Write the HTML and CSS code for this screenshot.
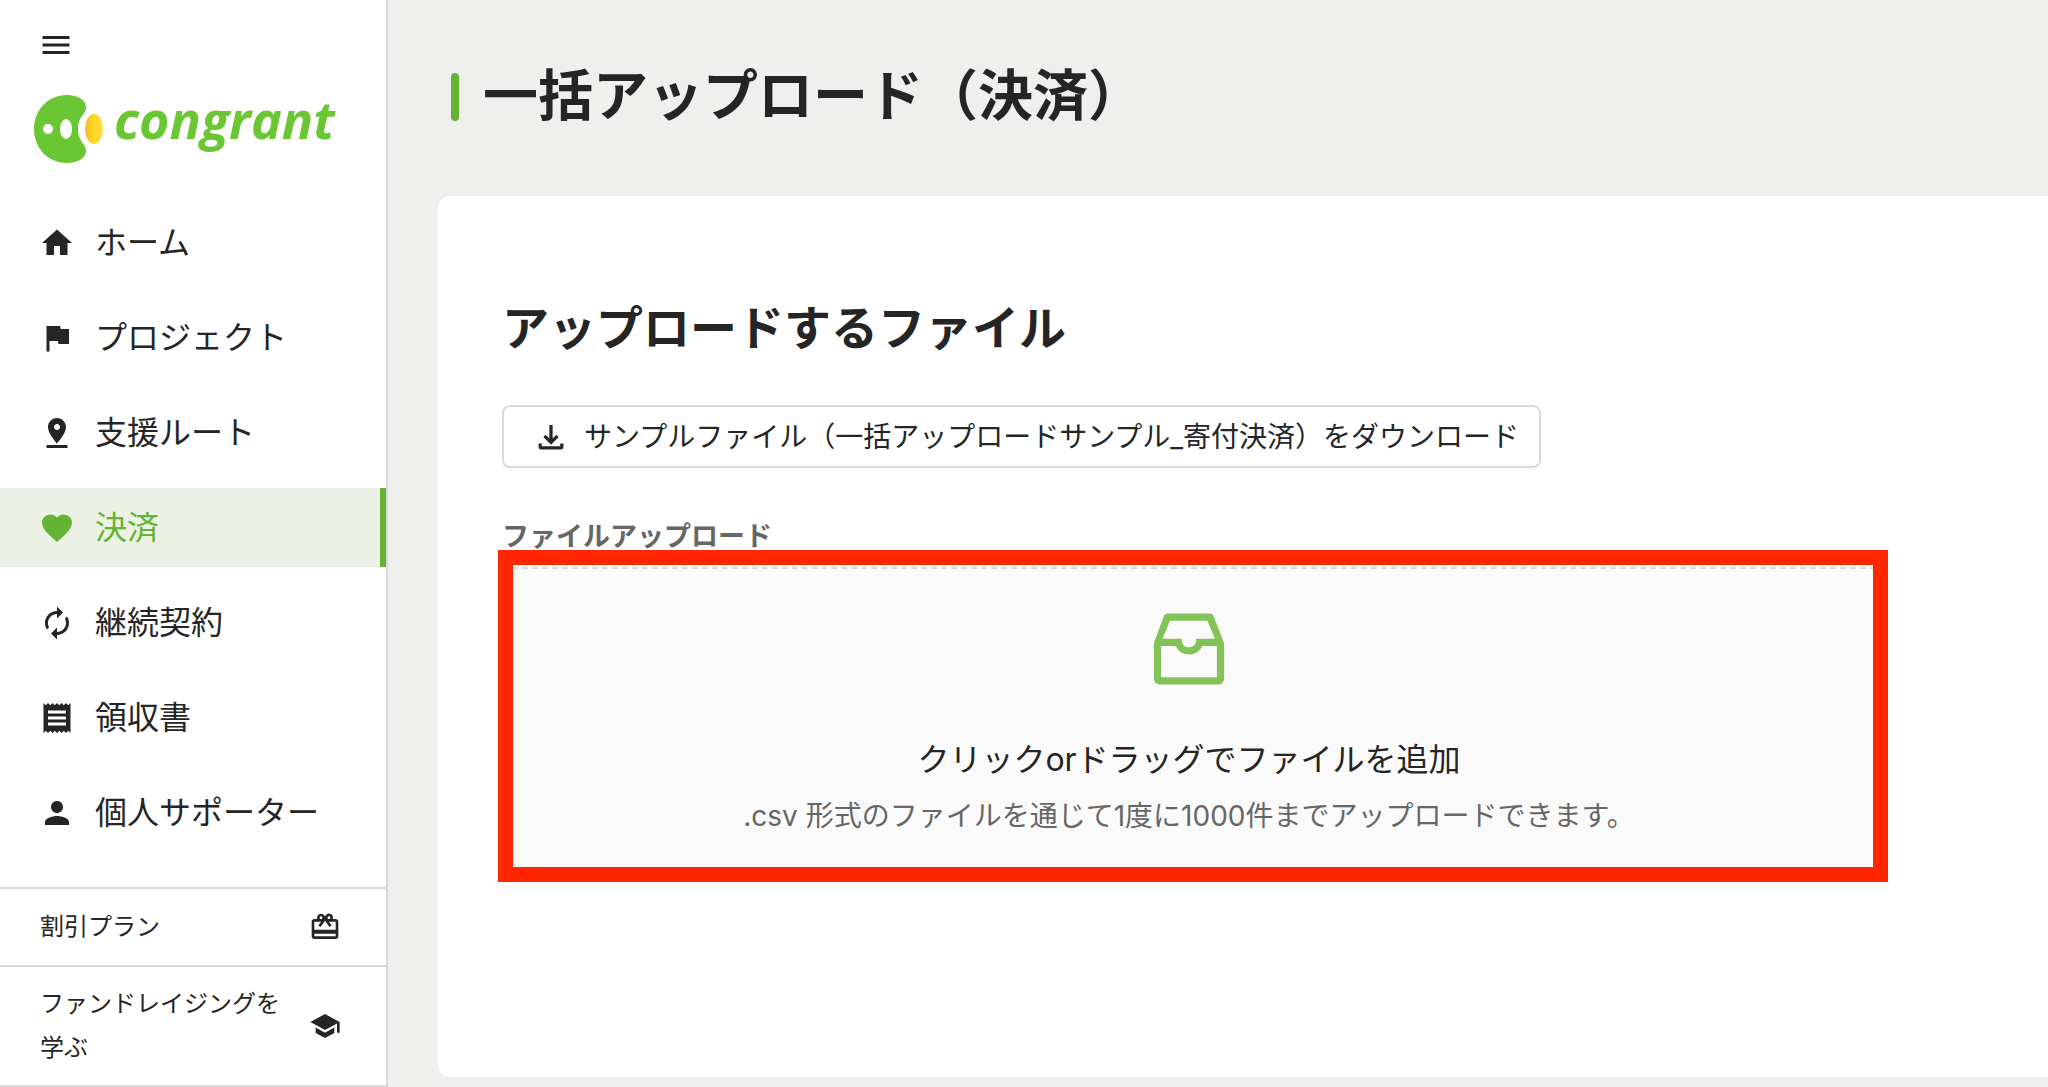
FILE: index.html
```
<!DOCTYPE html>
<html lang="ja">
<head>
  <meta charset="UTF-8">
  <meta name="viewport" content="width=device-width, initial-scale=1.0">
  <title>一括アップロード（決済）</title>

  <link rel="stylesheet" href="styles.css">
</head>
<body>

  <aside class="sidebar">
    <button class="menu-btn" type="button" aria-label="メニュー">
      <svg class="icon" viewBox="0 0 24 24"><path d="M3 18h18v-2H3v2zm0-5h18v-2H3v2zm0-7v2h18V6H3z"/></svg>
    </button>

    <a class="logo" href="#">
      <svg class="logo-mark" viewBox="33 94 72 70">
        <defs>
          <linearGradient id="bean">
            <stop offset="0" stop-color="#fdb52e"/>
            <stop offset="0.5" stop-color="#ffd91f"/>
            <stop offset="1" stop-color="#fddc4a"/>
          </linearGradient>
        </defs>
        <path fill="#6ac733" d="M67 95c11 0 19 5 19 12 0 8-8 9-8 22s8 14 8 22c0 7-8 12-19 12-19 0-33-15-33-34s14-34 33-34z"/>
        <circle cx="48" cy="129" r="5" fill="#fff"/>
        <ellipse cx="66" cy="129" rx="6" ry="10" fill="#fff"/>
        <ellipse cx="94" cy="129" rx="9" ry="15" fill="url(#bean)"/>
      </svg>
      <span class="logo-text">congrant</span>
    </a>

    <nav class="nav">
      <a class="nav-item" href="#">
        <svg class="icon" viewBox="0 0 24 24"><path d="M10 20v-6h4v6h5v-8h3L12 3 2 12h3v8z"/></svg>
        ホーム
      </a>
      <a class="nav-item" href="#">
        <svg class="icon" viewBox="0 0 24 24"><path d="M14.400 6L14 4H5v17h2v-7h5.600l.4 2h7V6z"/></svg>
        プロジェクト
      </a>
      <a class="nav-item" href="#">
        <svg class="icon" viewBox="0 0 24 24"><path d="M18 8c0-3.310-2.690-6-6-6S6 4.690 6 8c0 4.500 6 11 6 11s6-6.500 6-11zm-8 0c0-1.100.9-2 2-2s2 .9 2 2-.89 2-2 2c-1.100 0-2-.9-2-2zM5 20v2h14v-2H5z"/></svg>
        支援ルート
      </a>
      <a class="nav-item active" href="#">
        <svg class="icon" viewBox="0 0 24 24"><path d="M12 21.350l-1.450-1.320C5.400 15.360 2 12.280 2 8.500 2 5.420 4.420 3 7.500 3c1.740 0 3.410.81 4.500 2.090C13.090 3.810 14.760 3 16.500 3 19.580 3 22 5.420 22 8.500c0 3.780-3.400 6.860-8.550 11.540L12 21.350z"/></svg>
        決済
      </a>
      <a class="nav-item" href="#">
        <svg class="icon" viewBox="0 0 24 24"><path d="M12 6v3l4-4-4-4v3c-4.420 0-8 3.580-8 8 0 1.570.46 3.030 1.240 4.260L6.700 14.800c-.45-.83-.7-1.790-.7-2.800 0-3.310 2.690-6 6-6zm6.760 1.740L17.300 9.200c.44.84.7 1.790.7 2.800 0 3.310-2.690 6-6 6v-3l-4 4 4 4v-3c4.420 0 8-3.580 8-8 0-1.570-.46-3.030-1.240-4.260z"/></svg>
        継続契約
      </a>
      <a class="nav-item" href="#">
        <svg class="icon" viewBox="0 0 24 24"><path d="M18 17H6v-2h12v2zm0-4H6v-2h12v2zm0-4H6V7h12v2zM3 22l1.500-1.500L6 22l1.500-1.500L9 22l1.500-1.500L12 22l1.500-1.500L15 22l1.500-1.500L18 22l1.500-1.500L21 22V2l-1.500 1.500L18 2l-1.500 1.500L15 2l-1.500 1.500L12 2l-1.500 1.500L9 2 7.500 3.500 6 2 4.500 3.500 3 2v20z"/></svg>
        領収書
      </a>
      <a class="nav-item" href="#">
        <svg class="icon" viewBox="0 0 24 24"><path d="M12 12c2.210 0 4-1.790 4-4s-1.790-4-4-4-4 1.790-4 4 1.790 4 4 4zm0 2c-2.670 0-8 1.340-8 4v2h16v-2c0-2.660-5.330-4-8-4z"/></svg>
        個人サポーター
      </a>
    </nav>

    <div class="sub-nav">
      <a class="sub-item" href="#">
        <span>割引プラン</span>
        <svg class="icon small" viewBox="0 0 24 24"><path d="M20 6h-2.180c.11-.31.18-.65.18-1a2.996 2.996 0 0 0-5.500-1.650l-.5.67-.5-.68C10.960 2.540 10.050 2 9 2 7.340 2 6 3.340 6 5c0 .35.07.69.18 1H4c-1.110 0-1.990.89-1.990 2L2 19c0 1.110.89 2 2 2h16c1.110 0 2-.89 2-2V8c0-1.110-.89-2-2-2zm-5-2c.55 0 1 .45 1 1s-.45 1-1 1-1-.45-1-1 .45-1 1-1zM9 4c.55 0 1 .45 1 1s-.45 1-1 1-1-.45-1-1 .45-1 1-1zm11 15H4v-2h16v2zm0-5H4V8h5.080L7 10.830 8.620 12 11 8.760l1-1.360 1 1.360L15.380 12 17 10.830 14.920 8H20v6z"/></svg>
      </a>
      <a class="sub-item" href="#">
        <span>ファンドレイジングを学ぶ</span>
        <svg class="icon small" viewBox="0 0 24 24"><path d="M5 13.180v4L12 21l7-3.820v-4L12 17l-7-3.820zM12 3L1 9l11 6 9-4.910V17h2V9L12 3z"/></svg>
      </a>
    </div>
  </aside>

  <main class="main">
    <h1>一括アップロード（決済）</h1>

    <section class="card">
      <h2>アップロードするファイル</h2>

      <button class="download-btn" type="button">
        <svg class="download-icon" viewBox="0 0 24 24"><path d="M12 1v16M6 11l6 6 6-6M2 18v3q0 1 1 1h18q1 0 1-1v-3"/></svg>
        サンプルファイル（一括アップロードサンプル_寄付決済）をダウンロード
      </button>

      <label class="field-label" for="csv">ファイルアップロード</label>
      <div class="upload">
        <label class="dropzone" for="csv">
          <svg class="inbox-icon" viewBox="0 0 1024 1024"><path d="M885.200 446.300l-.2-.8-112.200-285.100c-5-16.100-19.900-27.200-36.800-27.200H281.200c-17 0-32.100 11.300-36.900 27.600L139.400 443l-.3.7-.2.8c-1.300 4.900-1.700 9.900-1 14.800-.1 1.600-.2 3.200-.2 4.800V830a60.900 60.900 0 0 0 60.800 60.800h627.200c33.500 0 60.800-27.300 60.900-60.800V464.100c0-1.300 0-2.600-.1-3.700.4-4.900 0-9.600-1.300-14.100zm-295.800-43l-.3 15.700c-.8 44.900-31.800 75.100-77.100 75.100-22.100 0-41.100-7.100-54.800-20.600S436 441.200 435.600 419l-.3-15.700H229.500L309 210h399.200l81.700 193.300H589.400zm-375 76.800h157.300c24.300 57.100 76 90.800 140.400 90.800 33.700 0 65-9.400 90.300-27.200 22.200-15.600 39.500-37.400 50.700-63.600h156.500V814H214.400V480.100z"/></svg>
          <span class="drop-title">クリックorドラッグでファイルを追加</span>
          <span class="drop-hint">.csv 形式のファイルを通じて1度に1000件までアップロードできます。</span>
        </label>
        <input class="file-input" id="csv" type="file" accept=".csv">
        <div class="highlight"></div>
      </div>
    </section>
  </main>

</body>
</html>
```
FILE: styles.css
```
* {
  margin: 0;
  padding: 0;
  box-sizing: border-box;
}

body {
  display: flex;
  min-height: 100vh;
  background: #efefee;
  color: #252525;
  font-family: Inter, "Noto Sans CJK JP", sans-serif;
  font-size: 28px;
}

a {
  color: inherit;
  text-decoration: none;
}

button {
  font: inherit;
  color: inherit;
  cursor: pointer;
}

.icon {
  width: 36px;
  height: 36px;
  flex: none;
  fill: currentColor;
}

.icon.small {
  width: 32px;
  height: 32px;
}

/* sidebar */
.sidebar {
  display: flex;
  flex-direction: column;
  flex: none;
  width: 388px;
  background: #fff;
  border-right: 2px solid #d9d9d9;
}

.menu-btn {
  align-self: flex-start;
  height: 36px;
  margin: 27px 0 0 38px;
  border: none;
  background: none;
}

.logo {
  display: flex;
  align-items: center;
  gap: 9px;
  height: 70px;
  margin: 31px 0 39px 33px;
}

.logo-mark {
  width: 72px;
  height: 70px;
  flex: none;
}

.logo-text {
  padding-bottom: 20px;
  color: #6ac733;
  font-family: "Open Sans", sans-serif;
  font-size: 52px;
  font-style: italic;
  font-weight: bold;
  line-height: 58px;
}

.nav {
  display: flex;
  flex-direction: column;
  gap: 16px;
  margin-bottom: 35px;
}

.nav-item {
  display: flex;
  align-items: center;
  gap: 20px;
  height: 79px;
  padding: 0 34px 0 39px;
  font-size: 32px;
  line-height: 48px;
}

.nav-item.active {
  background: #ebf2e5;
  border-right: 6px solid #64b334;
  color: #64b334;
}

.sub-nav {
  border-bottom: 2px solid #d9d9d9;
}

.sub-item {
  display: flex;
  align-items: center;
  justify-content: space-between;
  min-height: 78px;
  padding: 15px 45px 15px 40px;
  border-top: 2px solid #d9d9d9;
  font-size: 24px;
  line-height: 44px;
}

.sub-item span {
  width: 240px;
}

/* main */
.main {
  display: flex;
  flex-direction: column;
  flex: 1;
  min-width: 0;
  padding: 58px 0 10px 50px;
}

h1 {
  display: flex;
  align-items: center;
  gap: 24px;
  margin: 0 0 64px 13px;
  font-size: 55px;
  line-height: 74px;
}

h1::before {
  content: "";
  width: 8px;
  height: 48px;
  margin-top: 4px;
  border-radius: 4px;
  background: #64b334;
}

.card {
  display: flex;
  flex-direction: column;
  flex: 1;
  padding: 96px 172px 64px 64px;
  border-radius: 12px 0 0 12px;
  background: #fff;
}

h2 {
  margin-bottom: 41px;
  font-size: 47px;
  line-height: 72px;
}

.download-btn {
  display: flex;
  align-items: center;
  align-self: flex-start;
  gap: 20px;
  height: 63px;
  padding: 0 20px 0 34px;
  border: 2px solid #d9d9d9;
  border-radius: 8px;
  background: #fff;
  box-shadow: 0 3px 0 #fbfbfa;
  line-height: 44px;
}

.download-icon {
  width: 26px;
  height: 26px;
  fill: none;
  stroke: currentColor;
  stroke-width: 3;
}

.field-label {
  margin: 49px 0 10px;
  color: #666;
  font-size: 27px;
  font-weight: bold;
  line-height: 40px;
}

.upload {
  position: relative;
}

.dropzone {
  display: flex;
  flex-direction: column;
  align-items: center;
  padding: 32px 0;
  border: 2px dashed #d9d9d9;
  background: #fafafa;
  cursor: pointer;
}

.inbox-icon {
  width: 96px;
  height: 96px;
  margin-bottom: 39px;
  fill: #83c256;
}

.drop-title {
  margin-bottom: 10px;
  font-size: 32px;
  line-height: 48px;
}

.drop-hint {
  color: #666;
  line-height: 44px;
}

.file-input {
  position: absolute;
  inset: 0;
  opacity: 0;
  pointer-events: none;
}

/* frame drawn over the drop area */
.highlight {
  position: absolute;
  inset: -17px -12px -10px -4px;
  border: 15px solid #ff2600;
  pointer-events: none;
}
```
